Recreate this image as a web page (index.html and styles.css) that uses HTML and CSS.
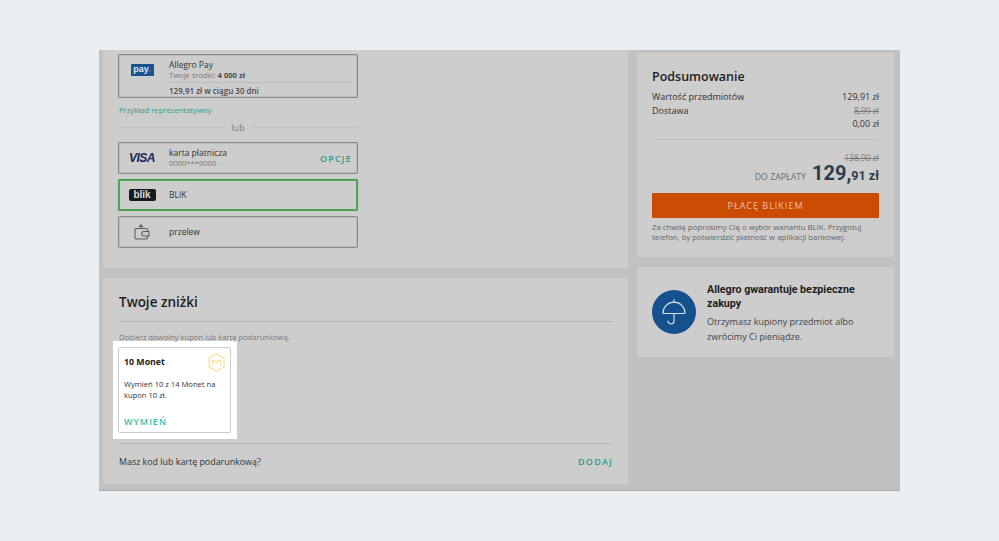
FILE: index.html
```html
<!DOCTYPE html>
<html lang="pl">

<head>
    <meta charset="UTF-8">
    <meta name="viewport" content="width=device-width, initial-scale=1.0">
    <title>Podsumowanie - Allegro</title>
    <link rel="stylesheet" href="styles.css">
</head>

<body>

    <div class="stage">
        <div class="col-left">
            <div class="panel panel-pay">
                <div class="option option-allegro">
                    <div class="allegro-top">
                        <div class="option-icon"><span class="pay-logo">pay<i>.</i></span></div>
                        <div class="option-text">
                            <div class="option-name">Allegro Pay</div>
                            <div class="option-sub">Twoje środki: <b>4 000 zł</b></div>
                        </div>
                    </div>
                    <div class="allegro-bottom">129,91 zł w ciągu 30 dni</div>
                </div>
                <a class="link-example">Przykład reprezentatywny</a>
                <div class="or-line"><span>lub</span></div>
                <div class="option">
                    <div class="option-icon"><span class="visa-logo">VISA</span></div>
                    <div class="option-text">
                        <div class="option-name">karta płatnicza</div>
                        <div class="option-sub">0000***0000</div>
                    </div>
                    <a class="action action-opcje">OPCJE</a>
                </div>
                <div class="option option-active">
                    <div class="option-icon"><span class="blik-logo">blik</span></div>
                    <div class="option-text">
                        <div class="option-name">BLIK</div>
                    </div>
                </div>
                <div class="option">
                    <div class="option-icon">
                        <svg class="wallet-icon" width="16" height="16" viewBox="0 0 16 16" fill="none" stroke="#5d5d5d" stroke-width="1.100">
                            <path d="M1 4.500h11a1.500 1.500 0 0 1 1.500 1.500v1.500"/>
                            <path d="M1 4.500v9a1.500 1.500 0 0 0 1.500 1.500h9.500a1.500 1.500 0 0 0 1.500-1.500v-1.500"/>
                            <path d="M15 7.500h-5a2.200 2.200 0 0 0 0 4.500h5z"/>
                            <path d="M7 4V1M5 2.800L7 .8l2 2"/>
                        </svg>
                    </div>
                    <div class="option-text">
                        <div class="option-name">przelew</div>
                    </div>
                </div>
            </div>

            <div class="panel panel-discounts">
                <h2>Twoje zniżki</h2>
                <p class="hint">Dobierz dowolny kupon lub kartę podarunkową.</p>
                <div class="highlight">
                    <div class="coin-card">
                        <div class="coin-head">
                            <strong>10 Monet</strong>
                            <svg width="17" height="19" viewBox="0 0 17 19" fill="none" stroke="#f5df8e" stroke-width="1.100" stroke-linejoin="round">
                                <path d="M8.500 .8L16 5v9l-7.500 4.200L1 14V5z"/>
                                <path d="M4.500 12.500V8.500q0-1.500 1.300-1.500 1 0 1.500 1l1.200 2 1.200-2q.5-1 1.500-1 1.300 0 1.300 1.500v4" stroke-width="1.200"/>
                            </svg>
                        </div>
                        <p>Wymień 10 z 14 Monet na kupon 10 zł.</p>
                        <a class="action">WYMIEŃ</a>
                    </div>
                </div>
                <div class="code-row">
                    <span>Masz kod lub kartę podarunkową?</span>
                    <a class="action action-dodaj">DODAJ</a>
                </div>
            </div>
        </div>

        <div class="col-right">
            <div class="panel panel-summary">
                <h2>Podsumowanie</h2>
                <div class="sum-row"><span>Wartość przedmiotów</span><span>129,91 zł</span></div>
                <div class="sum-row"><span>Dostawa</span><s>8,99 zł</s></div>
                <div class="sum-row sum-end"><span>0,00 zł</span></div>
                <div class="sum-total">
                    <s>138,90 zł</s>
                    <div class="to-pay"><span class="to-pay-label">DO ZAPŁATY</span> <span class="big">129,</span><span class="small">91 zł</span></div>
                </div>
                <button class="pay-btn">PŁACĘ BLIKIEM</button>
                <p class="note">Za chwilę poprosimy Cię o wybór wariantu BLIK. Przygotuj telefon, by potwierdzić płatność w aplikacji bankowej.</p>
            </div>

            <div class="panel panel-safe">
                <div class="safe-icon">
                    <svg width="24" height="26" viewBox="0 0 24 26" fill="none" stroke="#d3dee8" stroke-width="1.200" stroke-linecap="round" stroke-linejoin="round">
                        <path d="M12 .8v2.400"/>
                        <path d="M1 14C1 8 6 3.200 12 3.200S23 8 23 14q-.5 .5-1 .5H2q-.5 0-1-.5z"/>
                        <path d="M12 14.500v7.500a3 3 0 0 1-6 0"/>
                    </svg>
                </div>
                <div class="safe-text">
                    <h3>Allegro gwarantuje bezpieczne zakupy</h3>
                    <p>Otrzymasz kupiony przedmiot albo zwrócimy Ci pieniądze.</p>
                </div>
            </div>
        </div>
    </div>

</body>

</html>
```

FILE: styles.css
```css
* {
    box-sizing: border-box;
}

body {
    margin: 0;
    height: 541px;
    overflow: hidden;
    padding: 50px 0 0 99px;
    background-color: #ebeff2;
    font-family: "Open Sans", Arial, sans-serif;
    color: #2a2a2a;
}

.stage {
    display: flex;
    width: 801px;
    height: 441px;
    padding: 0 6px 0 4px;
    gap: 9px;
    background-color: #c0c1c2;
    border-bottom: 1px solid #a9aaab;
}

.col-left {
    width: 525px;
    display: flex;
    flex-direction: column;
    gap: 10px;
}

.col-right {
    width: 257px;
    padding-top: 3px;
    display: flex;
    flex-direction: column;
    gap: 10px;
}

.panel {
    background-color: #cdcdcd;
}

.panel-pay {
    height: 218px;
    padding: 4px 0 0 15px;
}

.option {
    display: flex;
    align-items: center;
    width: 240px;
    height: 32px;
    margin-bottom: 5px;
    border: 1px solid #8a8a8a;
    border-radius: 1px;
    box-shadow: inset 0 0 0 1px #bcbcbc;
    padding-right: 5px;
}

.option-active {
    border: 1px solid #3f9c46;
    box-shadow: inset 0 0 0 1px #5aa75f;
}

.option-allegro {
    display: block;
    height: 44px;
    margin-bottom: 7px;
    padding: 0;
}

.allegro-top {
    display: flex;
    align-items: center;
    height: 27px;
    padding-top: 2px;
}

.allegro-bottom {
    margin: 0 5px 0 50px;
    padding-top: 2px;
    border-top: 1px solid #bbbbbb;
    font-size: 8px;
    font-weight: 600;
    line-height: 12px;
    color: #4b4b4b;
}

.option-icon {
    width: 46px;
    margin-right: 4px;
    flex-shrink: 0;
    display: flex;
    justify-content: center;
    color: #5d5d5d;
}

.option-text {
    flex: 1;
}

.option-name {
    font-size: 8.500px;
    line-height: 10px;
    color: #333333;
}

.option-sub {
    font-size: 7.600px;
    line-height: 10px;
    color: #777777;
}

.option-sub b {
    color: #4b4b4b;
}

.pay-logo {
    display: block;
    width: 23px;
    height: 12px;
    margin-top: 1px;
    background-color: #1a5290;
    border-radius: 1px;
    font-family: "Liberation Sans", Arial, sans-serif;
    font-size: 9px;
    font-weight: bold;
    line-height: 10px;
    text-align: center;
    color: #dfe8f0;
}

.pay-logo i {
    font-style: normal;
    color: #d8531c;
}

.visa-logo {
    font-family: "Liberation Sans", Arial, sans-serif;
    font-size: 12px;
    font-weight: bold;
    font-style: italic;
    letter-spacing: -0.500px;
    color: #1b2559;
}

.blik-logo {
    position: relative;
    display: block;
    width: 27px;
    height: 12px;
    background-color: #1a1a1a;
    border-radius: 2px;
    font-family: "Liberation Sans", Arial, sans-serif;
    font-size: 10px;
    font-weight: bold;
    line-height: 12px;
    text-align: center;
    color: #dddddd;
}

.blik-logo::after {
    content: "";
    position: absolute;
    left: 8px;
    top: 2px;
    width: 2px;
    height: 2px;
    border-radius: 50%;
    background-color: #d8324a;
}

.link-example {
    display: block;
    margin-left: 1px;
    font-size: 7.700px;
    line-height: 10px;
    color: #2f9a87;
}

.or-line {
    display: flex;
    align-items: center;
    gap: 6px;
    width: 240px;
    height: 12px;
    margin: 6px 0 9px;
    font-size: 9px;
    color: #7c7c7c;
}

.or-line::before,
.or-line::after {
    content: "";
    flex: 1;
    height: 1px;
    background-color: #c0c0c0;
}

.action {
    font-size: 9px;
    font-weight: 600;
    letter-spacing: 1.200px;
    color: #2f9a8e;
}

.panel-discounts {
    height: 206px;
    padding: 0 15px 0 16px;
}

.panel-discounts h2 {
    margin: 0;
    height: 44px;
    border-bottom: 1px solid #b4b4b4;
    padding-top: 15px;
    font-size: 13.500px;
    font-weight: 600;
    line-height: 18px;
    color: #1d1d1d;
}

.hint {
    margin: 10px 0 0;
    font-size: 7.600px;
    line-height: 10px;
    color: #7a7a7a;
}

.highlight {
    width: 124px;
    height: 98px;
    margin: -1px 0 0 -6px;
    padding: 6px 6px 6px 5px;
    background-color: #ffffff;
}

.coin-card {
    height: 86px;
    padding: 5px 5px 0;
    border: 1px solid #cccccc;
    border-radius: 2px;
    background-color: #ffffff;
}

.coin-head {
    display: flex;
    justify-content: space-between;
    align-items: flex-start;
    height: 21px;
}

.coin-head strong {
    margin-top: 4px;
    font-size: 8.800px;
    line-height: 11px;
    color: #1d1d1d;
}

.coin-card p {
    height: 29px;
    margin: 5px 0 0;
    font-size: 7.600px;
    line-height: 10.500px;
    color: #333333;
}

.coin-card .action {
    letter-spacing: 1px;
    color: #33bfa8;
}

.code-row {
    display: flex;
    justify-content: space-between;
    align-items: center;
    height: 35px;
    margin-top: 4px;
    border-top: 1px solid #b9b9b9;
    font-size: 8.900px;
    color: #333333;
}

.panel-summary {
    height: 204px;
    padding: 15px 15px 0;
}

.panel-summary h2 {
    margin: 0 0 4px;
    font-size: 12.500px;
    font-weight: 600;
    line-height: 18px;
    color: #1d1d1d;
}

.sum-row {
    display: flex;
    justify-content: space-between;
    font-size: 9px;
    line-height: 13.500px;
    color: #333333;
}

.sum-end {
    justify-content: flex-end;
}

.panel-summary s {
    font-size: 8.500px;
    color: #7a7a7a;
}

.sum-total {
    margin-top: 8px;
    padding-top: 9px;
    border-top: 1px solid #bcbcbc;
    text-align: right;
    line-height: 12px;
}

.to-pay {
    height: 24px;
    margin-top: -3px;
    line-height: 24px;
    color: #2c3e4c;
    font-family: Roboto, Arial, sans-serif;
}

.to-pay-label {
    margin-right: 2px;
    font-family: "Open Sans", Arial, sans-serif;
    font-size: 8.800px;
    color: #6b6b6b;
}

.big {
    font-size: 20px;
    font-weight: bold;
}

.small {
    font-size: 12.500px;
    font-weight: bold;
}

.pay-btn {
    display: block;
    width: 100%;
    height: 25px;
    margin-top: 8px;
    border: none;
    border-radius: 1px;
    background-color: #cc4b03;
    font-family: "Open Sans", Arial, sans-serif;
    font-size: 9px;
    font-weight: 400;
    letter-spacing: 1px;
    color: #e6c2ac;
}

.note {
    margin: 4px 0 0;
    font-size: 7.800px;
    line-height: 10px;
    color: #666666;
}

.panel-safe {
    display: flex;
    align-items: center;
    gap: 11px;
    height: 90px;
    padding: 0 15px;
}

.safe-icon {
    display: flex;
    align-items: center;
    justify-content: center;
    width: 44px;
    height: 44px;
    flex-shrink: 0;
    border-radius: 50%;
    background-color: #14508c;
}

.safe-text {
    padding-top: 3px;
}

.safe-text h3 {
    margin: 0 0 3px;
    font-family: Roboto, Arial, sans-serif;
    font-size: 10.700px;
    font-weight: bold;
    line-height: 14px;
    color: #1d1d1d;
}

.safe-text p {
    margin: 0;
    font-size: 9px;
    line-height: 15px;
    color: #444444;
}
```
